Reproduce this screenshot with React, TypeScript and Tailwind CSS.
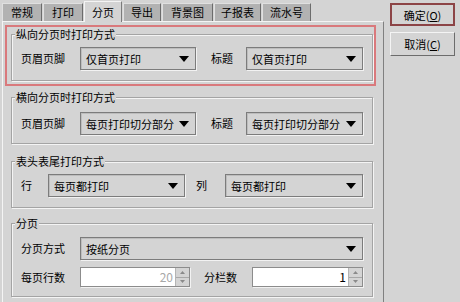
import React from "react";

const tabs = [
  { label: "常规", w: "w-[40px]" },
  { label: "打印", w: "w-[40px]" },
  { label: "分页", w: "w-[38px]", active: true },
  { label: "导出", w: "w-[38px]" },
  { label: "背景图", w: "w-[51px]" },
  { label: "子报表", w: "w-[47px]" },
  { label: "流水号", w: "w-[49px]" },
];

function Combo({ value, w }: { value: string; w: string }) {
  return (
    <div className={`${w} h-[23px] flex items-center border border-[#7c7c7c] bg-[#d4d4d4] shadow-[inset_1px_1px_0_#bdbdbd,1px_1px_0_#f2f2f2]`}>
      <span className="flex-1 pl-[5px] leading-[14px] whitespace-nowrap overflow-hidden">{value}</span>
      <svg width="10" height="6" viewBox="0 0 10 6" className="mr-[6px] shrink-0">
        <path d="M0 0H10L5 6Z" fill="#000" />
      </svg>
    </div>
  );
}

function Spinner({ value, w, disabled }: { value: string; w: string; disabled?: boolean }) {
  return (
    <div className={`${w} h-[20px] flex border border-[#8c8c8c] bg-white shadow-[1px_1px_0_#f2f2f2]`}>
      <span className={`flex-1 text-right pr-[2px] text-[12px] leading-[18px] ${disabled ? "text-[#a8a8a8]" : "text-black"}`}>{value}</span>
      <div className="w-[14px] flex flex-col border-l border-[#b4b4b4] bg-[#d4d4d4]">
        <div className="flex-1 flex items-center justify-center border-b border-[#a8a8a8]">
          <svg width="5" height="3" viewBox="0 0 5 3">
            <path d="M0 3H5L2.5 0Z" fill="#8a8a8a" />
          </svg>
        </div>
        <div className="flex-1 flex items-center justify-center">
          <svg width="5" height="3" viewBox="0 0 5 3">
            <path d="M0 0H5L2.5 3Z" fill="#8a8a8a" />
          </svg>
        </div>
      </div>
    </div>
  );
}

function Group({ title, className, children }: { title: string; className: string; children: React.ReactNode }) {
  return (
    <fieldset className={`border border-[#a4a4a4] shadow-[1px_1px_0_#f4f4f4,inset_1px_1px_0_#f4f4f4] px-0 ${className}`}>
      <legend className="ml-[3px] px-[1px] leading-[14px] bg-[#d4d4d4]">{title}</legend>
      {children}
    </fieldset>
  );
}

export default function App() {
  return (
    <div className="w-[460px] h-[302px] overflow-hidden bg-[#d4d4d4] flex text-[11px] text-black font-['Noto_Sans_CJK_SC','Noto_Sans',sans-serif]">
      <div className="w-[386px] flex flex-col">
        <div className="h-[21px] pl-[2px] flex items-end gap-[1px]">
          {tabs.map((t) =>
            t.active ? (
              <div key={t.label} className={`${t.w} h-[21px] -mb-[1px] relative z-10 bg-[#d4d4d4] border-t border-l border-[#f4f4f4] border-r-[#7c7c7c] border-r flex items-center justify-center`}>
                {t.label}
              </div>
            ) : (
              <div key={t.label} className={`${t.w} h-[18px] bg-[#b2b2b2] border-t border-l border-[#e0e0e0] border-r border-r-[#6c6c6c] flex items-center justify-center`}>
                {t.label}
              </div>
            )
          )}
        </div>
        <div className="ml-[2px] w-[382px] flex-1 border-t border-l border-[#f4f4f4] border-r border-r-[#808080]">
          <div className="mt-[3px] ml-[2px] w-[371px] border-2 border-[#d9797c] pl-[4px] pb-[3px]">
            <Group title="纵向分页时打印方式" className="w-[362px] pt-[6px] pb-[10px]">
              <div className="flex items-center pl-[9px]">
                <span className="w-[59px]">页眉页脚</span>
                <Combo value="仅首页打印" w="w-[116px]" />
                <span className="w-[35px] ml-[15px]">标题</span>
                <Combo value="仅首页打印" w="w-[117px]" />
              </div>
            </Group>
          </div>
          <div className="ml-[8px] w-[362px] flex flex-col">
            <Group title="横向分页时打印方式" className="mt-[4px] pt-[8px] pb-[8px]">
              <div className="flex items-center pl-[9px]">
                <span className="w-[59px]">页眉页脚</span>
                <Combo value="每页打印切分部分" w="w-[116px]" />
                <span className="w-[35px] ml-[15px]">标题</span>
                <Combo value="每页打印切分部分" w="w-[117px]" />
              </div>
            </Group>
            <Group title="表头表尾打印方式" className="mt-[10px] pt-[6px] pb-[10px]">
              <div className="flex items-center pl-[9px]">
                <span className="w-[27px]">行</span>
                <Combo value="每页都打印" w="w-[137px]" />
                <span className="w-[29px] ml-[11px]">列</span>
                <Combo value="每页都打印" w="w-[138px]" />
              </div>
            </Group>
            <Group title="分页" className="mt-[8px] pt-[7px] pb-[9px]">
              <div className="flex flex-col gap-[7px] pl-[9px]">
                <div className="flex items-center">
                  <span className="w-[59px]">分页方式</span>
                  <Combo value="按纸分页" w="w-[283px]" />
                </div>
                <div className="flex items-center">
                  <span className="w-[59px]">每页行数</span>
                  <Spinner value="20" w="w-[110px]" disabled />
                  <span className="w-[48px] ml-[14px]">分栏数</span>
                  <Spinner value="1" w="w-[111px]" />
                </div>
              </div>
            </Group>
          </div>
        </div>
      </div>
      <div className="flex-1 pl-[4px] flex flex-col">
        <button className="mt-[3px] w-[65px] h-[23px] border-2 border-[#8c4446] bg-[#d4d4d4] flex items-center justify-center leading-[14px]">
          确定(<span className="underline">O</span>)
        </button>
        <button className="mt-[6px] w-[65px] h-[24px] border border-[#f4f4f4] border-r-[#6c6c6c] border-b-[#6c6c6c] bg-[#d4d4d4] flex items-center justify-center leading-[14px]">
          取消(<span className="underline">C</span>)
        </button>
      </div>
    </div>
  );
}
